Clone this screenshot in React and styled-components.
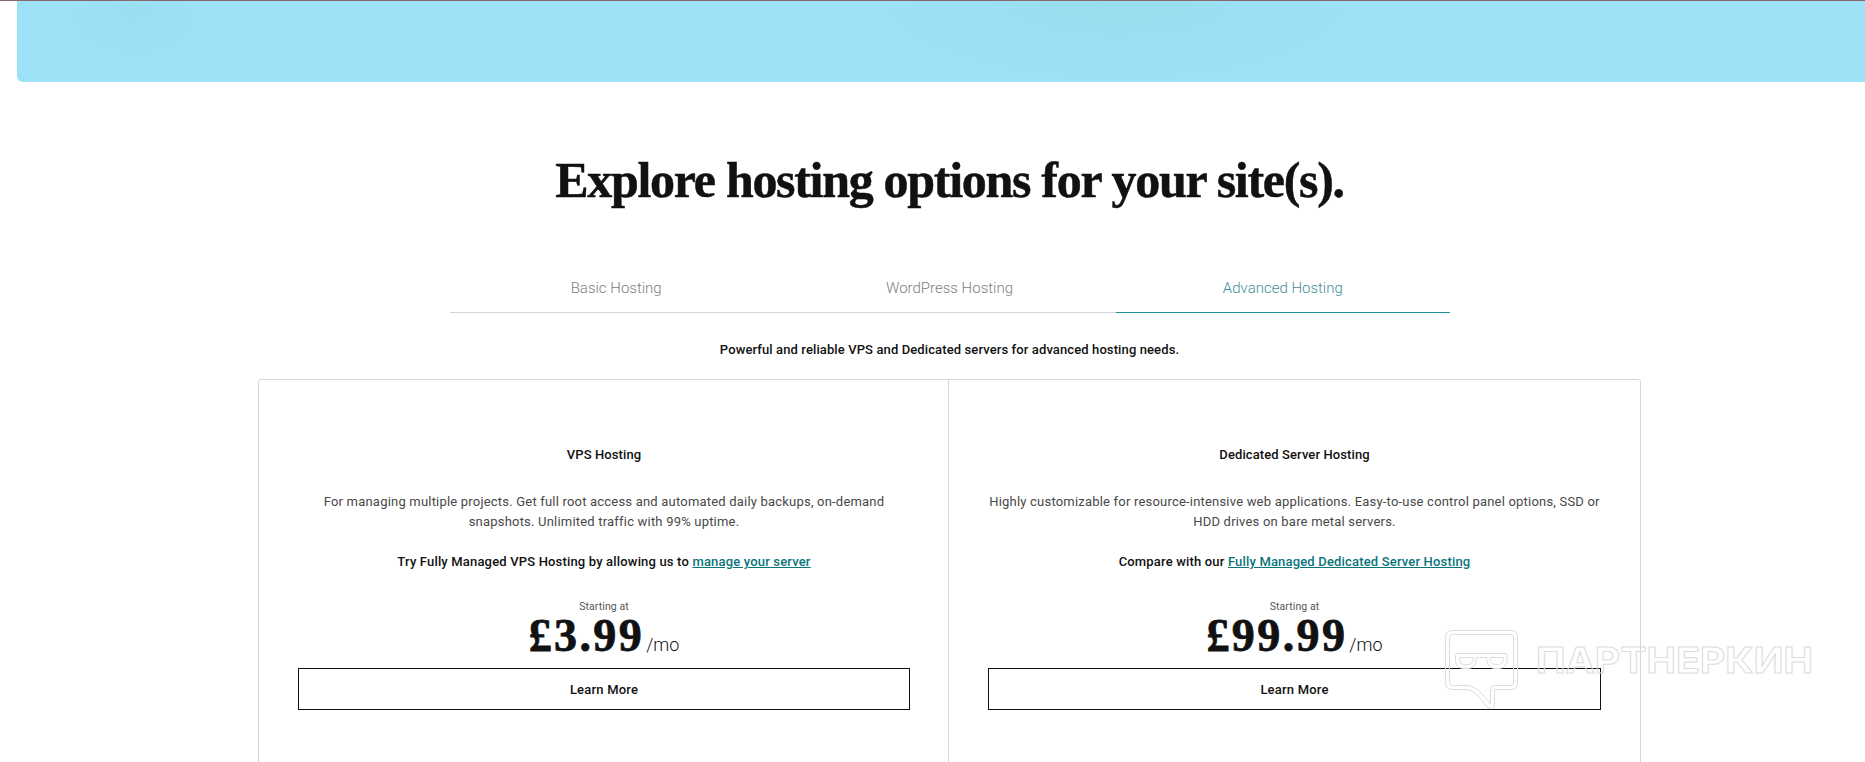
import styled, { createGlobalStyle } from 'styled-components'

const colors = {
  ink: '#111111',
  body: '#484848',
  muted: '#808080',
  teal: '#09757a',
  tealLine: '#1a9296',
  line: '#d6d6da',
  sky: '#9de1f6',
}

const GlobalStyle = createGlobalStyle`
* {
  box-sizing: border-box;
}
body {
  margin: 0;
  height: 762px;
  overflow: hidden;
  background: #ffffff;
  color: ${colors.ink};
  font-family: Roboto, "Liberation Sans", sans-serif;
}
`

const Page = styled.div`
  position: relative;
  height: 762px;
  overflow: hidden;
  border-top: 1px solid #8a6670;
`

const Main = styled.main`
  display: flex;
  flex-direction: column;
  align-items: center;
  width: 1865px;
  margin-left: 17px;
`

const Hero = styled.div`
  width: 100%;
  height: 81px;
  border-bottom-left-radius: 6px;
  background:
    radial-gradient(ellipse 230px 80px at 1100px -5px, rgba(150, 219, 232, 0.6), rgba(150, 219, 232, 0)),
    radial-gradient(ellipse 60px 40px at 115px 10px, rgba(150, 219, 232, 0.4), rgba(150, 219, 232, 0)),
    ${colors.sky};
`

const Title = styled.h1`
  margin: 68px 0 0;
  font-family: "Liberation Serif", serif;
  font-size: 50px;
  font-weight: 700;
  line-height: 60px;
  white-space: nowrap;
  letter-spacing: -1.3px;
  -webkit-text-stroke: 0.5px ${colors.ink};
`

const Tabs = styled.div`
  display: grid;
  grid-template-columns: repeat(3, 1fr);
  width: 1000px;
  margin-top: 54px;
`

const Tab = styled.div`
  padding: 14px 0;
  border-bottom: 1px solid ${({ $active }) => ($active ? colors.tealLine : colors.line)};
  color: ${({ $active }) => ($active ? '#459095' : colors.muted)};
  font-size: 15px;
  font-weight: 300;
  line-height: 20px;
  text-align: center;
`

const Lead = styled.p`
  margin: 27px 0 0;
  font-size: 13px;
  font-weight: 500;
  line-height: 20px;
  letter-spacing: 0.11px;
`

const Plans = styled.div`
  display: grid;
  grid-template-columns: 689px 692px;
  width: 1383px;
  height: 500px;
  margin-top: 19px;
  border: 1px solid ${colors.line};
  border-radius: 3px;
`

const Plan = styled.section`
  display: flex;
  flex-direction: column;
  align-items: center;
  padding: 65px 38px 0 39px;
  text-align: center;

  & + & {
    padding-right: 39px;
    border-left: 1px solid ${colors.line};
  }
`

const PlanName = styled.h2`
  margin: 0;
  font-size: 13px;
  font-weight: 500;
  line-height: 20px;
  letter-spacing: 0.1px;
`

const Description = styled.p`
  margin: 27px 0 0;
  color: ${colors.body};
  font-size: 13px;
  line-height: 20px;
  letter-spacing: 0.2px;
  white-space: nowrap;
`

const Managed = styled.p`
  margin: 20px 0 0;
  font-size: 13px;
  font-weight: 500;
  line-height: 20px;
  letter-spacing: 0.17px;
`

const ManagedLink = styled.a`
  color: ${colors.teal};
  text-decoration: underline;
`

const StartingAt = styled.div`
  margin-top: 28px;
  color: #555555;
  font-size: 10.5px;
  line-height: 14px;
  letter-spacing: 0.1px;
`

const PriceRow = styled.div`
  display: flex;
  align-items: baseline;
  height: 44px;
`

const Price = styled.span`
  font-family: "Liberation Serif", serif;
  font-size: 46px;
  font-weight: 700;
  line-height: 44px;
  letter-spacing: 2.4px;
  -webkit-text-stroke: 0.8px ${colors.ink};
`

const Period = styled.span`
  margin-left: 2px;
  font-size: 18px;
  font-weight: 300;
  line-height: 20px;
`

const LearnMore = styled.button`
  width: 100%;
  height: 42px;
  margin-top: 10px;
  padding: 1px 0 0;
  border: 1px solid ${colors.ink};
  background: transparent;
  color: ${colors.ink};
  font-family: inherit;
  font-size: 13px;
  font-weight: 500;
  line-height: 20px;
  letter-spacing: 0.2px;
`

const Watermark = styled.svg`
  position: absolute;
  left: 1440px;
  top: 624px;
  pointer-events: none;
`

const plans = [
  {
    name: 'VPS Hosting',
    lines: [
      'For managing multiple projects. Get full root access and automated daily backups, on-demand',
      'snapshots. Unlimited traffic with 99% uptime.',
    ],
    managed: 'Try Fully Managed VPS Hosting by allowing us to ',
    link: 'manage your server',
    price: '£3.99',
  },
  {
    name: 'Dedicated Server Hosting',
    lines: [
      'Highly customizable for resource-intensive web applications. Easy-to-use control panel options, SSD or',
      'HDD drives on bare metal servers.',
    ],
    managed: 'Compare with our ',
    link: 'Fully Managed Dedicated Server Hosting',
    price: '£99.99',
  },
]

function PartnerMark() {
  return (
    <Watermark width="380" height="90" viewBox="0 0 380 90" fill="none" stroke="#dcdcdc">
      <path d="M11.500 5.500H71.500A6 6 0 0 1 77.500 11.500V58.500A6 6 0 0 1 71.500 64.500H54.500V80C54.500 84.500 49 85 46 81C40 73 34 65 26 64.500H11.500A6 6 0 0 1 5.500 58.500V11.500A6 6 0 0 1 11.500 5.500Z" />
      <path d="M12.500 9.500H70.500A3 3 0 0 1 73.500 12.500V57.500A3 3 0 0 1 70.500 60.500H53.500A3 3 0 0 0 50.500 63.500V79C44 71 37 61 27 60.500H12.500A3 3 0 0 1 9.500 57.500V12.500A3 3 0 0 1 12.500 9.500Z" />
      <path d="M17.500 28.500H65A2 2 0 0 1 67 30.500V34C67 41 63 43.500 59 43.500H55C50 43.500 46.500 40 46.500 32.500H36.500C36.500 40 33 43.500 28 43.500H24C19 43.500 15.500 41 15.500 34V30.500A2 2 0 0 1 17.500 28.500Z" />
      <path d="M19.500 32.500H33.500C33.500 37.500 31 39.500 28 39.500H24.500C21 39.500 19.500 37.500 19.500 32.500ZM50 32.500H63.500C63.500 37.500 61.500 39.500 58.500 39.500H55.500C52 39.500 50 37.500 50 32.500Z" />
      <text
        x="96"
        y="48"
        textLength="277"
        lengthAdjust="spacingAndGlyphs"
        fontFamily="Inter, sans-serif"
        fontSize="36"
        fontWeight="700"
      >
        ПАРТНЕРКИН
      </text>
    </Watermark>
  )
}

function App() {
  return (
    <Page>
      <GlobalStyle />
      <Main>
        <Hero />
        <Title>Explore hosting options for your site(s).</Title>
        <Tabs>
          <Tab>Basic Hosting</Tab>
          <Tab>WordPress Hosting</Tab>
          <Tab $active>Advanced Hosting</Tab>
        </Tabs>
        <Lead>Powerful and reliable VPS and Dedicated servers for advanced hosting needs.</Lead>
        <Plans>
          {plans.map((plan) => (
            <Plan key={plan.name}>
              <PlanName>{plan.name}</PlanName>
              <Description>
                {plan.lines[0]}
                <br />
                {plan.lines[1]}
              </Description>
              <Managed>
                {plan.managed}
                <ManagedLink>{plan.link}</ManagedLink>
              </Managed>
              <StartingAt>Starting at</StartingAt>
              <PriceRow>
                <Price>{plan.price}</Price>
                <Period>/mo</Period>
              </PriceRow>
              <LearnMore>Learn More</LearnMore>
            </Plan>
          ))}
        </Plans>
      </Main>
      <PartnerMark />
    </Page>
  )
}

export default App
